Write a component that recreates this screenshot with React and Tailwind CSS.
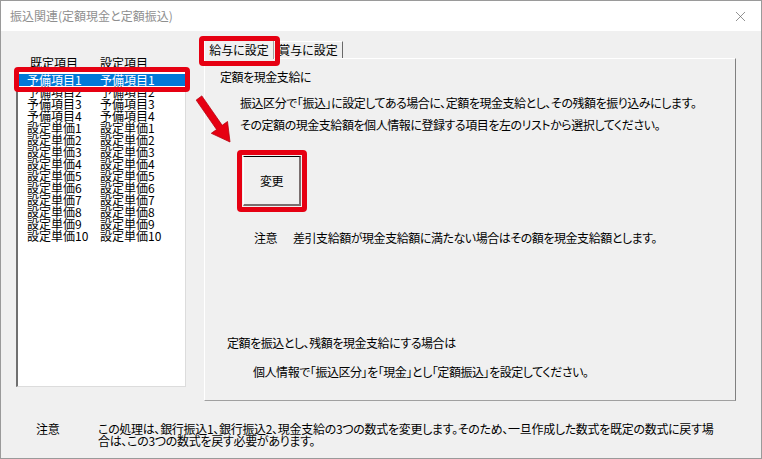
import { X } from "lucide-react";

const rows = [
  ["予備項目1", "予備項目1"],
  ["予備項目2", "予備項目2"],
  ["予備項目3", "予備項目3"],
  ["予備項目4", "予備項目4"],
  ["設定単価1", "設定単価1"],
  ["設定単価2", "設定単価2"],
  ["設定単価3", "設定単価3"],
  ["設定単価4", "設定単価4"],
  ["設定単価5", "設定単価5"],
  ["設定単価6", "設定単価6"],
  ["設定単価7", "設定単価7"],
  ["設定単価8", "設定単価8"],
  ["設定単価9", "設定単価9"],
  ["設定単価10", "設定単価10"],
];

const App = () => {
  return (
    <div className="w-[762px] h-[459px] relative overflow-hidden flex flex-col bg-[#f0f0f0] border border-[#9a9a9a] text-black font-['Noto_Sans_CJK_JP',sans-serif] text-[12px] leading-[12px]">
      {/* title bar */}
      <div className="h-[30px] bg-white flex items-center justify-between pl-[9px] pr-[12px] shrink-0">
        <span className="text-[#8f8f8f] text-[12px] [font-feature-settings:'palt']">振込関連(定額現金と定額振込)</span>
        <X size={17} strokeWidth={1} className="text-[#666]" />
      </div>

      <div className="flex-1 flex flex-col">
        <div className="flex items-start">
          {/* left list */}
          <div className="relative ml-[15px] mt-[26px] w-[170px]">
            <div className="flex h-[12px]">
              <span className="w-[84px] pl-[14px]">既定項目</span>
              <span>設定項目</span>
            </div>
            <div className="mt-[1px] h-[317px] bg-white border-t-2 border-l-2 border-t-[#707070] border-l-[#707070] border-r border-b border-r-[#dcdcdc] border-b-[#dcdcdc] pt-[2px]">
              {rows.map((r, i) => (
                <div
                  key={i}
                  className={
                    i === 0
                      ? "flex h-[12px] ml-[1px] pl-[8px] bg-[#0078d7] text-white"
                      : "flex h-[12px] ml-[1px] pl-[8px]"
                  }
                >
                  <span className="w-[73px] whitespace-nowrap">{r[0]}</span>
                  <span className="whitespace-nowrap">{r[1]}</span>
                </div>
              ))}
            </div>
            <div className="absolute left-[-2px] top-[10px] w-[176px] h-[25px] border-[5px] border-[#e60012] rounded-[4px]" />
          </div>

          {/* right tabs + panel */}
          <div className="relative ml-[18px] mt-[7px] w-[532px]">
            <div className="flex items-end h-[20px]">
              <div className="w-[70px] h-[20px] bg-[#f0f0f0] border-t border-l border-white border-r border-r-[#a0a0a0] flex items-center justify-center [font-feature-settings:'palt'] relative z-10 mb-[-1px]">
                給与に設定
              </div>
              <div className="w-[69px] h-[17px] border-t border-t-white border-r border-r-[#696969] flex items-center justify-center [font-feature-settings:'palt']">
                賞与に設定
              </div>
            </div>
            <div className="absolute left-[-5px] top-[-2px] w-[81px] h-[30px] border-[5px] border-[#e60012] rounded-[4px] z-20" />

            <div className="h-[343px] border-t border-l border-white border-r border-b border-r-[#808080] border-b-[#a0a0a0] flex flex-col [font-feature-settings:'palt'] tracking-[-0.45px] whitespace-nowrap">
              <p className="mt-[12px] ml-[15px]">定額を現金支給に</p>
              <p className="mt-[14px] ml-[35px]">振込区分で「振込」に設定してある場合に、定額を現金支給とし、その残額を振り込みにします。</p>
              <p className="mt-[10px] ml-[35px]">その定額の現金支給額を個人情報に登録する項目を左のリストから選択してください。</p>
              <div className="mt-[19px] ml-[32px] w-[70px] h-[62px] border-[5px] border-[#e60012] rounded-[4px] p-[1px]">
                <button className="w-[58px] h-[50px] bg-[#f0f0f0] border-t border-t-black border-l border-l-white border-r-2 border-b-2 border-r-[#7a6f6f] border-b-[#7a6f6f] flex items-center justify-center text-[12px]">
                  変更
                </button>
              </div>
              <div className="mt-[20px] ml-[49px] flex">
                <span className="w-[39px]">注意</span>
                <span>差引支給額が現金支給額に満たない場合はその額を現金支給額とします。</span>
              </div>
              <p className="mt-[93px] ml-[22px]">定額を振込とし、残額を現金支給にする場合は</p>
              <p className="mt-[17px] ml-[48px]">個人情報で「振込区分」を「現金」とし「定額振込」を設定してください。</p>
            </div>
          </div>
        </div>

        {/* bottom note */}
        <div className="mt-[22px] ml-[35px] flex [font-feature-settings:'palt'] tracking-[-0.3px] whitespace-nowrap">
          <span className="w-[62px]">注意</span>
          <span>
            この処理は、銀行振込1、銀行振込2、現金支給の3つの数式を変更します。そのため、一旦作成した数式を既定の数式に戻す場
            <br />
            合は、この3つの数式を戻す必要があります。
          </span>
        </div>
      </div>

      {/* red arrow annotation */}
      <svg className="absolute left-0 top-0 pointer-events-none" width="762" height="459">
        <polygon
          points="200.8,94.9 221.2,124.3 226.5,120.5 229,141 210.3,132.3 215.6,128.5 195.2,99.1"
          fill="#e60012"
          stroke="#b8000e"
          strokeWidth="0.8"
        />
      </svg>
    </div>
  );
};

export default App;
